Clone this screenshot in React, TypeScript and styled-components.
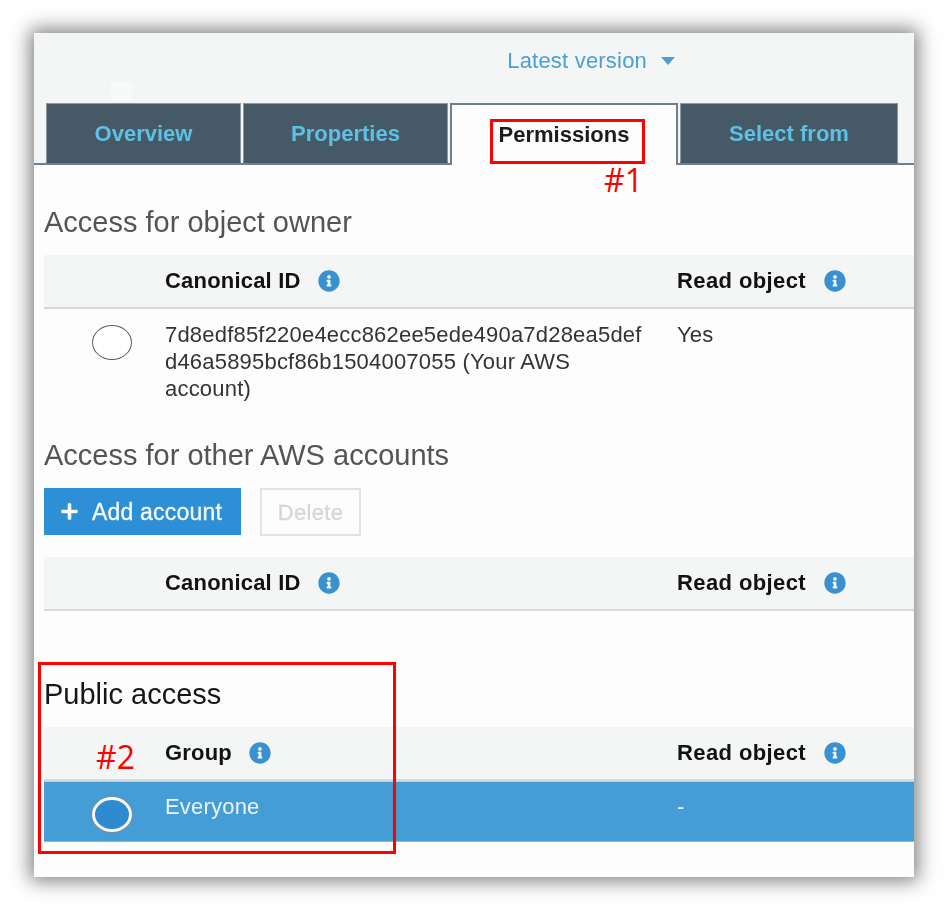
import React from 'react';
import styled, { createGlobalStyle } from 'styled-components';
import { FaInfoCircle, FaPlus } from 'react-icons/fa';

const GlobalStyle = createGlobalStyle`
  html, body {
    margin: 0;
    padding: 0;
    background: #ffffff;
  }
  body {
    width: 951px;
    height: 916px;
    overflow: hidden;
    font-family: "Liberation Sans", Arial, sans-serif;
  }
`;

const Page = styled.div`
  position: relative;
  width: 951px;
  height: 916px;
  padding: 33px 37px 39px 34px;
  box-sizing: border-box;
`;

const Window = styled.div`
  position: relative;
  height: 100%;
  background: #fdfdfd;
  box-shadow: 0 0 18px 4px rgba(0, 0, 0, 0.5);
  overflow: hidden;
  filter: blur(0.4px);
`;

const Header = styled.div`
  height: 132px;
  background: #f4f6f6;
  box-sizing: border-box;
`;

const VersionRow = styled.div`
  height: 70px;
  box-sizing: border-box;
  padding: 15px 239px 0 0;
  display: flex;
  justify-content: flex-end;
  align-items: flex-start;
  gap: 14px;
  color: #4a9fd4;
  font-size: 22px;
  letter-spacing: 0.2px;
  line-height: 26px;
`;

const Caret = styled.span`
  width: 0;
  height: 0;
  margin-top: 9px;
  border-left: 7.5px solid transparent;
  border-right: 7.5px solid transparent;
  border-top: 8px solid #4a9fd4;
`;

const TabBar = styled.div`
  height: 62px;
  box-sizing: border-box;
  padding-left: 12px;
  display: flex;
  align-items: flex-start;
  box-shadow: inset 0 -2px 0 #6f7f8c;
`;

const Tab = styled.div<{ $width: number; $active?: boolean }>`
  width: ${({ $width }) => $width}px;
  height: ${({ $active }) => ($active ? 62 : 60)}px;
  margin-right: 2px;
  box-sizing: border-box;
  display: flex;
  align-items: center;
  justify-content: center;
  font-size: 22px;
  font-weight: 700;
  padding-top: ${({ $active }) => ($active ? '0' : '2px')};
  color: ${({ $active }) => ($active ? '#1c1c1c' : '#5cc1e4')};
  background: ${({ $active }) => ($active ? '#fdfdfd' : '#465967')};
  border: ${({ $active }) => ($active ? '2px solid #6f7f8c' : '1px solid #8b99a3')};
  border-bottom: ${({ $active }) => ($active ? '0' : '1px solid #465967')};
`;

const Body = styled.div`
  padding-left: 10px;
`;

const Heading = styled.h2<{ $dark?: boolean; $top: number }>`
  margin: ${({ $top }) => $top}px 0 0;
  height: 32px;
  font-size: 29px;
  line-height: 32px;
  font-weight: 400;
  color: ${({ $dark }) => ($dark ? '#161616' : '#545454')};
`;

const Table = styled.div<{ $top: number }>`
  margin-top: ${({ $top }) => $top}px;
`;

const Row = styled.div<{ $head?: boolean; $selected?: boolean }>`
  display: grid;
  grid-template-columns: 121px 512px 1fr;
  box-sizing: border-box;
  font-size: 22px;
  letter-spacing: 0.2px;
  background: ${({ $head, $selected }) =>
    $head ? '#f4f6f6' : $selected ? '#459dd6' : 'transparent'};
  color: ${({ $selected }) => ($selected ? '#e9f4fb' : '#333333')};
  ${({ $head }) =>
    $head ? 'height: 54px; border-bottom: 2px solid #d8d8d8; align-items: center;' : ''}
`;

const HeadCell = styled.div`
  display: flex;
  align-items: center;
  gap: 17px;
  font-weight: 700;
  color: #111111;
`;

const ReadHeadCell = styled(HeadCell)`
  gap: 18px;
  letter-spacing: 0.4px;
`;

const InfoIcon = styled(FaInfoCircle)`
  width: 22px;
  height: 22px;
  color: #3a91d0;
`;

const RadioCell = styled.div<{ $top: number }>`
  padding: ${({ $top }) => $top}px 0 0 48px;
`;

const Radio = styled.div<{ $selected?: boolean }>`
  width: 40px;
  height: 35px;
  box-sizing: border-box;
  border-radius: 50%;
  background: ${({ $selected }) => ($selected ? '#2f8bd0' : '#ffffff')};
  border: ${({ $selected }) => ($selected ? '3px solid #f4f8fb' : '1.5px solid #5f5f5f')};
  box-shadow: ${({ $selected }) => ($selected ? '0 0 0 1px #7c8a94' : 'none')};
`;

const OwnerCell = styled.div`
  padding-top: 12px;
  line-height: 27px;
  height: 91px;
  box-sizing: border-box;
`;

const EveryoneRow = styled(Row)`
  height: 61px;
  border-top: 1px solid #b9d3e6;
  border-bottom: 1px solid #7dbce6;
  line-height: 27px;
`;

const PlainCell = styled.div`
  padding-top: 11px;
`;

const ButtonRow = styled.div`
  margin-top: 17px;
  display: flex;
  gap: 19px;
`;

const AddButton = styled.div`
  width: 197px;
  height: 47px;
  display: flex;
  align-items: center;
  gap: 13px;
  padding: 2px 0 0 16px;
  box-sizing: border-box;
  background: #2d8fd5;
  color: #f6fbfe;
  font-size: 23px;
  letter-spacing: 0.2px;
  -webkit-text-stroke: 0.3px #f6fbfe;
`;

const PlusIcon = styled(FaPlus)`
  width: 19px;
  height: 19px;
  margin-top: -2px;
`;

const DeleteButton = styled.div`
  width: 101px;
  height: 48px;
  display: flex;
  align-items: center;
  justify-content: center;
  box-sizing: border-box;
  padding-top: 2px;
  border: 2px solid #e3e3e3;
  color: #d6d6d6;
  font-size: 22px;
  letter-spacing: 0.3px;
  -webkit-text-stroke: 0.3px #d6d6d6;
`;

const Glare = styled.div`
  position: absolute;
  left: 77px;
  top: 49px;
  width: 21px;
  height: 19px;
  background: #f8fafa;
`;

/* the red review marks drawn on top of the screenshot */
const MarkBox = styled.div<{ $left: number; $top: number; $width: number; $height: number }>`
  position: absolute;
  left: ${({ $left }) => $left}px;
  top: ${({ $top }) => $top}px;
  width: ${({ $width }) => $width}px;
  height: ${({ $height }) => $height}px;
  box-sizing: border-box;
  border: 3px solid #ff0000;
`;

const MarkLabel = styled.div<{ $left: number; $top: number }>`
  position: absolute;
  left: ${({ $left }) => $left}px;
  top: ${({ $top }) => $top}px;
  font-family: "Open Sans", "Noto Sans", sans-serif;
  font-size: 32px;
  line-height: 40px;
  color: #ff0000;
`;

function HeadRow({ first }: { first: string }) {
  return (
    <Row $head>
      <div />
      <HeadCell>
        {first}
        <InfoIcon />
      </HeadCell>
      <ReadHeadCell>
        Read object
        <InfoIcon />
      </ReadHeadCell>
    </Row>
  );
}

export default function App() {
  return (
    <Page>
      <GlobalStyle />
      <Window>
        <Header>
          <VersionRow>
            Latest version
            <Caret />
          </VersionRow>
          <TabBar>
            <Tab $width={195}>Overview</Tab>
            <Tab $width={205}>Properties</Tab>
            <Tab $width={228} $active>
              Permissions
            </Tab>
            <Tab $width={218}>Select from</Tab>
          </TabBar>
        </Header>
        <Glare />
        <Body>
          <Heading $top={41}>Access for object owner</Heading>
          <Table $top={17}>
            <HeadRow first="Canonical ID" />
            <Row>
              <RadioCell $top={16}>
                <Radio />
              </RadioCell>
              <OwnerCell>
                7d8edf85f220e4ecc862ee5ede490a7d28ea5def
                <br />
                d46a5895bcf86b1504007055 (Your AWS
                <br />
                account)
              </OwnerCell>
              <OwnerCell>Yes</OwnerCell>
            </Row>
          </Table>
          <Heading $top={39}>Access for other AWS accounts</Heading>
          <ButtonRow>
            <AddButton>
              <PlusIcon />
              Add account
            </AddButton>
            <DeleteButton>Delete</DeleteButton>
          </ButtonRow>
          <Table $top={21}>
            <HeadRow first="Canonical ID" />
          </Table>
          <Heading $top={67} $dark>
            Public access
          </Heading>
          <Table $top={17}>
            <HeadRow first="Group" />
            <EveryoneRow $selected>
              <RadioCell $top={15}>
                <Radio $selected />
              </RadioCell>
              <PlainCell>Everyone</PlainCell>
              <PlainCell>-</PlainCell>
            </EveryoneRow>
          </Table>
        </Body>
      </Window>
      <MarkBox $left={490} $top={119} $width={155} $height={45} />
      <MarkLabel $left={604} $top={160}>
        #1
      </MarkLabel>
      <MarkBox $left={38} $top={662} $width={358} $height={192} />
      <MarkLabel $left={96} $top={737}>
        #2
      </MarkLabel>
    </Page>
  );
}
